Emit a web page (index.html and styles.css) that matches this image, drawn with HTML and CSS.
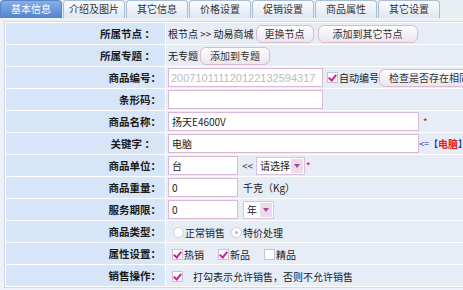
FILE: index.html
```html
<!DOCTYPE html>
<html>
<head>
<meta charset="utf-8">
<link rel="stylesheet" href="styles.css">
</head>
<body>
<div class="tabs">
  <div class="tab active">基本信息</div>
  <div class="tab">介绍及图片</div>
  <div class="tab">其它信息</div>
  <div class="tab">价格设置</div>
  <div class="tab">促销设置</div>
  <div class="tab">商品属性</div>
  <div class="tab">其它设置</div>
</div>
<div class="panel">
<table class="form">
  <tr><td class="lbl sp">所属节点 ：</td><td class="val"><span class="txt">根节点 &gt;&gt; 动易商城</span><button class="btn b-change">更换节点</button><button class="btn b-other">添加到其它节点</button></td></tr>
  <tr><td class="lbl sp">所属专题 ：</td><td class="val"><span class="txt">无专题</span><button class="btn b-topic">添加到专题</button></td></tr>
  <tr><td class="lbl">商品编号：</td><td class="val"><input class="in w-mid gray" value="200710111120122132594317"><span class="chk on c-auto"></span><span class="txt">自动编号</span><button class="btn b-check">检查是否存在相同</button></td></tr>
  <tr><td class="lbl">条形码：</td><td class="val"><input class="in w-mid" value=""></td></tr>
  <tr><td class="lbl">商品名称：</td><td class="val"><input class="in w-long" value="扬天E4600V"><span class="req">*</span></td></tr>
  <tr><td class="lbl sp">关键字 ：</td><td class="val"><input class="in w-long" value="电脑"><span class="arrow">&lt;=</span><span class="br">【</span><span class="kw">电脑</span><span class="br">】</span></td></tr>
  <tr><td class="lbl">商品单位：</td><td class="val"><input class="in w-short" value="台"><span class="lt">&lt;&lt;</span><span class="sel s-unit"><span class="opt">请选择</span><span class="dd"></span></span><span class="req r2">*</span></td></tr>
  <tr><td class="lbl">商品重量：</td><td class="val"><input class="in w-short" value="0"><span class="txt unit">千克（Kg）</span></td></tr>
  <tr><td class="lbl">服务期限：</td><td class="val"><input class="in w-short" value="0"><span class="sel s-year"><span class="opt">年</span><span class="dd"></span></span></td></tr>
  <tr><td class="lbl">商品类型：</td><td class="val"><span class="radio r-first"></span><span class="txt">正常销售</span><span class="radio on"></span><span class="txt">特价处理</span></td></tr>
  <tr><td class="lbl">属性设置：</td><td class="val"><span class="chk on"></span><span class="txt t-hot">热销</span><span class="chk on"></span><span class="txt t-new">新品</span><span class="chk"></span><span class="txt">精品</span></td></tr>
  <tr><td class="lbl">销售操作：</td><td class="val"><span class="chk on"></span><span class="txt t-sale">打勾表示允许销售，否则不允许销售</span></td></tr>
</table>
</div>
</body>
</html>
```
FILE: styles.css
```css
html, body {
  margin: 0;
  padding: 0;
}
body {
  width: 463px;
  height: 290px;
  overflow: hidden;
  background: #eef2f8;
  font-family: "Noto Sans CJK SC", "DejaVu Sans", sans-serif;
  font-size: 10px;
  color: #222;
}
.tabs {
  display: flex;
  height: 18px;
  background: #e9eef5;
}
.tab {
  flex: none;
  width: 62px;
  height: 18px;
  box-sizing: border-box;
  margin-right: 1px;
  border: 1px solid #a9bcd6;
  border-bottom: none;
  border-radius: 4px 4px 0 0;
  background: linear-gradient(#fbfcfe, #dfe7f2);
  text-align: center;
  line-height: 16px;
  font-size: 10px;
  color: #333;
  white-space: nowrap;
}
.tab.active {
  background: linear-gradient(#86aee6, #4f84d0);
  border-color: #5b86c6;
  color: #fff;
}
.panel {
  padding: 3px 0 0 4px;
}
.form {
  width: 480px;
  border-collapse: separate;
  border-spacing: 1px;
  background: #fff;
  border: 1px solid #cfd9e7;
}
.form td {
  height: 21px;
  padding: 0;
  white-space: nowrap;
  box-sizing: border-box;
}
.lbl {
  width: 159px;
  background: #d6e5f7;
  text-align: right;
  padding-right: 4px !important;
  font-weight: bold;
  font-size: 10.5px;
  color: #1a1a1a;
}
.lbl.sp {
  padding-right: 10px !important;
}
.val {
  background: #e6edf7;
  padding-left: 2px !important;
}
.txt {
  vertical-align: middle;
}
.in {
  box-sizing: border-box;
  height: 19px;
  border: 1px solid #d9b9d8;
  background: #fff;
  font-family: "Noto Sans CJK SC", sans-serif;
  font-size: 10px;
  padding: 0 3px;
  vertical-align: middle;
  color: #222;
}
.in.gray {
  color: #bbb;
  font-family: "Liberation Sans", sans-serif;
  font-size: 11px;
  padding-left: 2px;
}
.w-mid { width: 155px; }
.w-long { width: 251px; }
.w-short { width: 70px; }
.btn {
  box-sizing: border-box;
  height: 18px;
  border: 1px solid #dcb8d6;
  border-radius: 6px;
  background: linear-gradient(#fdfdfe, #eae6ef);
  font-family: "Noto Sans CJK SC", sans-serif;
  font-size: 10px;
  line-height: 14px;
  color: #333;
  padding: 0;
  vertical-align: middle;
}
.b-change { width: 58px; margin-left: 2px; }
.b-other { width: 100px; margin-left: 4px; }
.b-topic { width: 70px; margin-left: 2px; }
.b-check { width: 100px; margin-left: 0; }
.chk, .radio {
  display: inline-block;
  box-sizing: border-box;
  width: 11px;
  height: 11px;
  border: 1px solid #c7c0d6;
  background: #fff;
  vertical-align: middle;
  position: relative;
  margin: 0 1px 0 4px;
}
.chk.on::after {
  content: "";
  position: absolute;
  left: 2px;
  top: 0px;
  width: 3px;
  height: 6px;
  border-right: 2px solid #c3268f;
  border-bottom: 2px solid #c3268f;
  transform: rotate(40deg);
}
.c-auto { margin-left: 4px; }
.radio {
  border-radius: 50%;
  width: 11px;
  height: 11px;
  margin: 0 1px 0 6px;
  border-color: #c8cfdd;
}
.r-first { margin-left: 5px; }
.radio.on::after {
  content: "";
  position: absolute;
  left: 3px;
  top: 3px;
  width: 3px;
  height: 3px;
  border-radius: 50%;
  background: #d9a0c8;
}
.t-hot { margin-right: 10px; }
.t-new { margin-right: 10px; }
.t-sale { margin-left: 9px; }
.req {
  color: #e01010;
  margin-left: 4px;
  vertical-align: middle;
}
.r2 { margin-left: 1px; }
.arrow { color: #2030e0; vertical-align: middle; font-size: 9px; }
.br { color: #1030e0; font-weight: bold; vertical-align: middle; font-size: 9px; }
.kw { color: #e02020; font-weight: bold; vertical-align: middle; }
.lt { margin: 0 3px 0 4px; vertical-align: middle; color: #333; }
.unit { margin-left: 5px; }
.sel {
  display: inline-flex;
  align-items: center;
  box-sizing: border-box;
  height: 18px;
  border: 1px solid #d6c4da;
  background: #fff;
  vertical-align: middle;
}
.s-unit { width: 49px; }
.s-year { width: 31px; margin-left: 5px; }
.opt {
  flex: 1;
  padding-left: 3px;
  color: #222;
}
.dd {
  width: 12px;
  height: 14px;
  margin-right: 1px;
  background: #ecdbeb;
  position: relative;
}
.dd::after {
  content: "";
  position: absolute;
  left: 3px;
  top: 5px;
  border-left: 3px solid transparent;
  border-right: 3px solid transparent;
  border-top: 4px solid #b0449a;
}
```
